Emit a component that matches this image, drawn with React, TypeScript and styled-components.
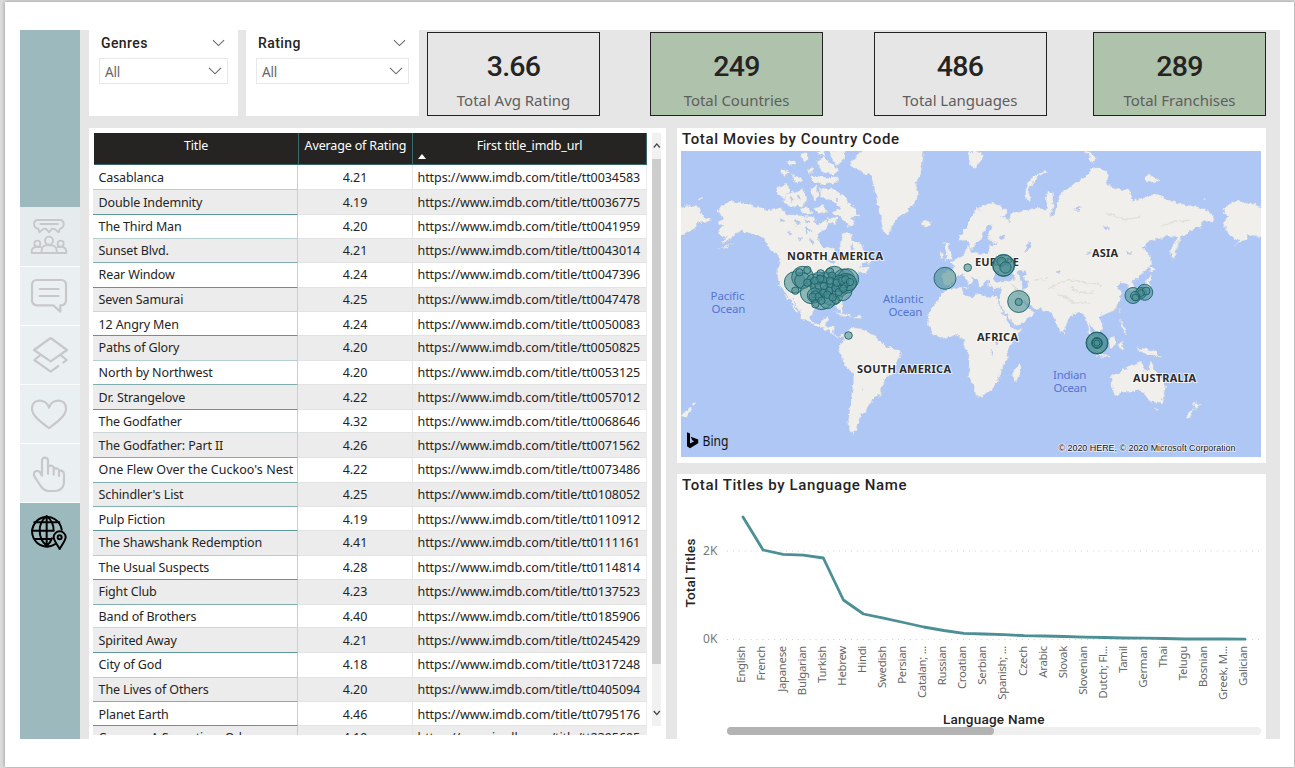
import React from "react";
import styled, { createGlobalStyle } from "styled-components";

const UI = `"Noto Sans", "Open Sans", sans-serif`;
const DIN = `Roboto, "Liberation Sans", sans-serif`;
const TEAL = "#4c8f94";

const GlobalStyle = createGlobalStyle`
  * { box-sizing: border-box; }
  body { margin: 0; background: #dedede; font-family: ${UI}; color: #252423; overflow: hidden; }
`;

const Page = styled.div`
  height: 768px;
  padding: 2px 1px 1px 5px;
  background: #dcdcdc;
`;

const Sheet = styled.main`
  height: 765px;
  padding: 28px 14px 0 15px;
  background: #fff;
  box-shadow: 0 0 4px rgba(0, 0, 0, 0.35);
`;

const Report = styled.div`
  display: flex;
  height: 709px;
  padding-right: 14px;
  background: #e6e6e6;
`;

const Sidebar = styled.nav`
  width: 60px;
  flex: none;
  padding-top: 177px;
  background: #9cbabe;
`;

const NavItem = styled.div<{ $h: number; $tone?: "first" | "active" }>`
  height: ${(p) => p.$h}px;
  overflow: hidden;
  background: ${(p) => (p.$tone === "active" ? "#9cbabe" : p.$tone === "first" ? "#e6eced" : "#eaf0f1")};
  border-bottom: ${(p) => (p.$tone === "active" ? "0" : "1px solid #fbfdfd")};
  svg { display: block; width: 60px; height: 60px; fill: none; stroke: ${(p) => (p.$tone === "active" ? "#000" : "#c8c8ca")};
    stroke-width: 6.6; stroke-linejoin: round; stroke-linecap: round; }
`;

const Content = styled.div`
  flex: 1;
  padding-left: 9px;
  display: flex;
  flex-direction: column;
  gap: 12px;
`;

const TopRow = styled.div`
  display: flex;
  height: 86px;
`;

const Slicer = styled.section<{ $w: number }>`
  width: ${(p) => p.$w}px;
  flex: none;
  margin-right: 8px;
  padding: 0 10px;
  background: #fff;
`;

const SlicerHead = styled.div`
  display: flex;
  align-items: center;
  justify-content: space-between;
  height: 27px;
  padding: 0 3px 1px 2px;
  font: 500 14px ${DIN};
  letter-spacing: 0.4px;
`;

const SlicerBox = styled.div`
  display: flex;
  align-items: center;
  justify-content: space-between;
  height: 26px;
  margin-top: 1px;
  padding: 0 5px;
  border: 1px solid #e8e8e8;
  font-size: 13.5px;
  line-height: 20px;
  letter-spacing: -0.2px;
  color: #666;
  span { padding-top: 2px; }
`;

const Cards = styled.div`
  flex: 1;
  display: grid;
  grid-template-columns: 223px 223.5px 219.5px 173px;
  padding-top: 2px;
`;

const Card = styled.article<{ $green?: boolean }>`
  width: 173px;
  height: 84px;
  padding-top: 17px;
  border: 1px solid #222;
  background: ${(p) => (p.$green ? "#aec2ac" : "#e6e6e6")};
  text-align: center;
`;

const CardValue = styled.div`
  font: 500 28.5px/34px ${DIN};
  letter-spacing: -0.7px;
`;

const CardLabel = styled.div`
  font-size: 15px;
  line-height: 22px;
  margin-top: 5px;
  letter-spacing: -0.03px;
  color: #605e5c;
`;

const Body = styled.div`
  display: flex;
  gap: 11px;
  height: 611px;
`;

const TablePanel = styled.section`
  display: flex;
  width: 577px;
  flex: none;
  padding: 5px 5px 4px 4px;
  background: #fff;
`;

const Table = styled.div`
  width: 554px;
  height: 602px;
  overflow: hidden;
`;

const Columns = styled.div`
  display: grid;
  grid-template-columns: 205px 115px 234px;
`;

const HeadRow = styled(Columns)`
  height: 32px;
  padding-left: 1px;
  grid-template-columns: 205px 114px 234px;
`;

const HeadCell = styled.div`
  position: relative;
  padding-top: 3px;
  background: #252423;
  border-right: 1px solid #38696c;
  border-bottom: 1px solid #38696c;
  font-size: 12.5px;
  line-height: 20px;
  letter-spacing: -0.15px;
  text-align: center;
  white-space: nowrap;
  color: #fff;
`;

const SortMark = styled.i`
  position: absolute;
  left: 5px;
  bottom: 5px;
  border: 4.5px solid transparent;
  border-top: 0;
  border-bottom: 5px solid #fff;
`;

const Row = styled(Columns)<{ $h: number; $odd: boolean; $drop: number }>`
  height: ${(p) => p.$h}px;
  font-size: 12.5px;
  line-height: ${(p) => 24 + 2 * p.$drop}px;
  white-space: nowrap;
  background: ${(p) => (p.$odd ? "#ececec" : "#fff")};
  > div { height: ${(p) => p.$h}px; }
`;

const TitleCell = styled.div<{ $line: string; $track?: number }>`
  padding-left: 5.6px;
  letter-spacing: ${(p) => p.$track ?? -0.14}px;
  border-right: 1px solid #c3d3d3;
  border-bottom: 1px solid ${(p) => p.$line};
`;

const RatingCell = styled.div`
  text-align: center;
  letter-spacing: -0.05px;
  border-right: 1px solid #e6e6e6;
  border-bottom: 1px solid #e3e3e3;
`;

const UrlCell = styled.div`
  padding-left: 4.5px;
  letter-spacing: -0.07px;
  border-right: 1px solid #ececec;
  border-bottom: 1px solid #e3e3e3;
`;

const Scroll = styled.div`
  display: flex;
  flex-direction: column;
  align-items: center;
  justify-content: space-between;
  width: 9px;
  height: 593px;
  margin-left: 5px;
  background: #f1f1f1;
  svg { display: block; }
`;

const Thumb = styled.div`
  width: 9px;
  height: 505px;
  margin-bottom: 36px;
  background: #cdcdcd;
`;

const RightCol = styled.div`
  flex: 1;
  display: flex;
  flex-direction: column;
  gap: 11px;
`;

const Panel = styled.section<{ $h: number }>`
  height: ${(p) => p.$h}px;
  padding: 0 4px;
  background: #fff;
  svg { display: block; }
`;

const PanelTitle = styled.h2`
  margin: 0;
  height: 23px;
  padding-left: 1px;
  font: 500 15px/22px ${DIN};
  letter-spacing: 0.62px;
  white-space: nowrap;
`;

const ChartTrack = styled.div`
  width: 534px;
  height: 8px;
  margin-left: 46px;
  border-radius: 4px;
  background: #efefef;
`;

const ChartThumb = styled.div`
  width: 267px;
  height: 8px;
  border-radius: 4px;
  background: #b3b3b3;
`;

const Chevron = ({ w = 14, color = "#666" }: { w?: number; color?: string }) => (
  <svg width={w} height={8} viewBox="0 0 14 8" fill="none" stroke={color} strokeWidth={1.1}>
    <path d="M1 .8 7 6.8 13 .8" />
  </svg>
);

const PeopleIcon = () => (
  <svg viewBox="60 21 180 180">
    <path strokeWidth={5.6} d="M112 60H182Q191 62 191 72Q191 84 180 86L176 97L164 87L156 86L147 97L138 86L130 87L118 97L115 86Q102 84 102 72Q102 62 112 60ZM121 72H174" />
    <g strokeWidth={5.6}>
      <circle cx="112" cy="131" r="9" /><circle cx="147" cy="122" r="12" /><circle cx="182" cy="131" r="9" />
      <path d="M125 159V151Q126 136 140 136H154Q168 136 170 151V159M122 141H108Q96 142 95 153V159H199V153Q198 142 186 141H173" />
    </g>
  </svg>
);
const CommentIcon = () => (
  <svg viewBox="60 201 180 180">
    <path d="M110 240H184Q198 241 198 254V302Q197 315 184 316H181V335L160 316H110Q97 315 96 302V254Q97 241 110 240ZM119 267H176M119 288H176" />
  </svg>
);
const LayersIcon = () => (
  <svg viewBox="60 378 180 180">
    <path d="M152 414 201 450 152 484 102 450ZM119 467 103 480 152 515 175 498M184 467 200 480 190 488" />
  </svg>
);
const HeartIcon = () => (
  <svg viewBox="60 555 180 180">
    <path d="M147 684C125 668 96 648 96 626C96 594 138 594 147 623C156 594 198 594 198 626C198 648 169 668 147 684Z" />
  </svg>
);
const HandIcon = () => (
  <svg viewBox="60 732 180 180">
    <path d="M126 827V782Q127 773 135 773Q143 773 144 782V821M144 800Q153 794 161 801V824M161 807Q172 802 177 810V828M178 812Q190 810 192 821V848Q189 873 163 873H146Q132 872 122 858L103 829Q99 817 108 813Q115 811 121 818L126 827" />
  </svg>
);
const GlobeIcon = () => (
  <svg viewBox="60 909 180 180">
    <g strokeWidth={6}>
      <path d="M166 1032A44.5 44.5 0 1 1 185 989M140 948V1037M140 948C112 970 112 1014 140 1037M140 948C154 959 161 975 161 992M140 1037Q151 1029 156 1015M96 992H160M103 967H178M103 1017H155" />
      <path d="M179 1047C170 1031 161 1021 161 1012A18 18 0 0 1 197 1012C197 1021 188 1031 179 1047Z" />
      <circle cx="179" cy="1012" r="6" />
    </g>
  </svg>
);

const S = "#5d969b";
const M = "#82aeb2";
const L = "#b5cfd0";
const G = "#cdd6d6";
const rows: [string, string, string, number, string, number?][] = [
  ["Casablanca", "4.21", "0034583", 25, L, 1],
  ["Double Indemnity", "4.19", "0036775", 25, S, 1],
  ["The Third Man", "4.20", "0041959", 24, L],
  ["Sunset Blvd.", "4.21", "0043014", 24, M],
  ["Rear Window", "4.24", "0047396", 25, S],
  ["Seven Samurai", "4.25", "0047478", 24, G],
  ["12 Angry Men", "4.24", "0050083", 24, S, 1],
  ["Paths of Glory", "4.20", "0050825", 25, L],
  ["North by Northwest", "4.20", "0053125", 24, M],
  ["Dr. Strangelove", "4.22", "0057012", 25, S, 1],
  ["The Godfather", "4.32", "0068646", 23, G],
  ["The Godfather: Part II", "4.26", "0071562", 25, M, 1],
  ["One Flew Over the Cuckoo's Nest", "4.22", "0073486", 25, M],
  ["Schindler's List", "4.25", "0108052", 24, M],
  ["Pulp Fiction", "4.19", "0110912", 24, S, 1],
  ["The Shawshank Redemption", "4.41", "0111161", 25, L],
  ["The Usual Suspects", "4.28", "0114814", 24, S],
  ["Fight Club", "4.23", "0137523", 25, M],
  ["Band of Brothers", "4.40", "0185906", 23, G],
  ["Spirited Away", "4.21", "0245429", 25, S, 1],
  ["City of God", "4.18", "0317248", 25, L],
  ["The Lives of Others", "4.20", "0405094", 24, M],
  ["Planet Earth", "4.46", "0795176", 24, S, 1],
  ["Cosmos: A Spacetime Odyssey", "4.19", "2395695", 25, M],
];

/* Western hemisphere coastlines */
const westLand = [
  "M20 262 60 255 88 262 100 290 122 300 110 308 85 308 78 325 20 356Z",
  "M143 275 160 252 190 243 240 252 300 272 330 262 350 282 400 288 432 290 440 312 468 300 478 318 450 340 445 362 462 382 492 388 504 412 514 402 510 372 518 338 545 342 550 365 575 375 580 388 600 412 606 425 582 432 572 442 600 440 588 458 566 456 560 470 550 500 530 530 520 545 515 560 524 590 514 588 505 562 480 555 460 562 440 560 425 575 422 592 430 610 450 612 460 595 476 590 472 606 465 618 490 620 490 640 500 648 525 640 522 650 498 652 480 636 462 626 438 620 410 605 395 590 385 565 366 535 385 576 376 572 354 532 340 510 325 485 322 460 326 430 330 415 310 395 295 380 284 360 265 345 240 342 215 330 200 342 175 362 150 372 170 352 146 342 145 330 158 320 140 305 160 298 154 288Z",
  "M525 640 545 625 580 630 612 645 630 665 655 680 690 692 695 705 680 725 675 760 645 778 640 800 630 822 612 830 605 850 590 860 588 878 572 884 570 902 560 915 562 930 550 938 552 950 538 932 535 900 540 860 545 820 550 790 550 762 530 742 515 715 505 692 510 675 520 660Z",
  "M580 80 575 96 545 120 540 130 560 152 600 165 612 200 622 250 632 296 640 335 655 345 665 318 682 296 702 284 720 262 738 250 746 215 736 190 752 165 764 80Z",
  "M750 305 765 300 785 305 780 318 765 322 752 314Z",
  "M320 200 350 192 362 212 346 236 322 224Z",
  "M352 222 400 206 412 236 398 262 352 258 340 240Z",
  "M330 152 350 146 356 160 340 170Z", "M362 160 384 168 400 182 376 188Z", "M352 126 372 118 380 132 360 138Z",
  "M392 104 410 98 418 118 400 124Z", "M412 148 428 142 432 156 416 162Z", "M422 204 440 198 446 232 430 246Z",
  "M424 166 470 172 500 170 504 186 470 194 430 186Z", "M440 124 462 110 480 130 508 150 490 164 456 156Z",
  "M476 90 526 90 520 120 500 140 486 118Z", "M440 92 462 92 466 108 446 106Z",
  "M450 204 490 206 520 226 556 268 566 290 548 292 554 316 536 320 512 292 486 280 510 262 482 240 452 234Z",
  "M474 292 500 296 500 314 476 312Z", "M430 262 456 256 470 274 440 282Z", "M392 268 410 260 428 280 408 284Z",
  "M488 574 520 578 548 590 530 590 500 580Z", "M556 588 572 588 570 596 556 594Z",
  "M35 888 52 870 62 858 66 868 46 892Z", "M66 852 70 842 78 850 70 858Z", "M84 235 94 234 94 240 84 240Z", "M146 386 190 372 170 384Z",
];

/* Eastern hemisphere coastlines */
const eastLand = [
  "M-6 365 0 345 20 320 38 285 62 260 90 247 118 255 142 272 134 290 122 288 148 304 152 282 200 270 240 262 260 268 258 235 264 212 278 215 280 262 270 290 284 284 290 250 310 216 345 190 385 165 398 142 425 145 447 165 440 192 470 208 508 210 520 242 562 228 590 222 622 240 680 255 720 262 745 272 766 296 756 308 730 300 724 322 690 332 664 352 655 380 640 416 630 400 634 376 652 352 620 346 600 360 575 358 548 386 570 402 576 430 556 456 536 468 518 486 526 508 512 514 500 492 480 488 470 500 486 520 478 550 465 570 445 580 425 584 418 594 430 615 428 630 414 640 400 622 388 612 396 644 408 668 400 668 386 640 382 612 374 590 360 574 345 580 322 604 310 635 300 638 284 600 275 580 255 572 225 566 205 552 182 532 200 562 226 576 216 592 182 610 160 618 150 600 130 570 115 540 122 520 125 505 100 508 84 496 90 484 70 484 72 502 60 498 50 478 34 466 40 486 30 500 6 460 -6 466 -28 498 -50 498 -52 456 -22 456 -18 436 -30 426 0 412 16 404 22 378 32 378 32 400 60 400 84 398 88 380 112 368 88 362 84 340 94 320 84 312 70 338 60 362 46 370 40 388 28 380 20 360Z",
  "M-50 512 -30 506 5 503 12 522 40 535 46 520 78 528 108 530 124 566 142 602 152 620 164 630 188 624 168 655 142 684 146 714 122 745 120 772 102 802 76 824 52 827 38 792 25 752 30 720 20 690 10 658 -12 646 -52 656 -80 640 -96 618 -94 580 -72 545Z",
  "M178 728 184 745 174 782 160 782 156 762Z",
  "M452 770 482 758 510 736 545 726 550 746 565 752 572 720 586 750 606 775 618 796 615 822 604 850 580 850 560 832 544 812 500 815 464 828 456 800Z",
  "M582 864 596 864 590 876Z", "M708 842 714 852 722 852 706 868 702 858Z", "M704 868 686 894 678 890 694 872Z",
  "M443 664 464 648 470 664 460 686 448 684Z", "M378 652 402 668 428 694 424 702 404 690Z", "M410 703 450 708 450 713 412 708Z",
  "M474 668 492 664 484 676 488 690 478 688Z", "M528 682 550 688 580 690 606 710 580 706 556 704Z",
  "M480 594 488 606 496 634 502 644 490 640Z", "M478 566 482 572 478 580Z", "M310 632 318 640 312 648Z",
  "M570 436 586 448 572 456ZM572 460 572 492 556 510 534 516 520 522 530 508 552 500Z",
  "M258 150 264 156 236 170 214 196 206 216 212 240 198 236 196 212 212 176Z",
  "M24 96 50 94 72 104 60 124 42 146 30 130Z", "M370 90 392 98 412 116 396 128 388 110Z",
  "M554 168 578 168 604 182 578 186 556 182Z", "M728 234 740 236 732 240Z",
  "M910 262 870 250 830 243 800 256 788 280 810 290 792 305 800 335 835 365 820 382 870 346 910 352Z",
  "M-46 366 -34 372 -30 396 -22 416 -46 424 -38 404 -46 388Z", "M-60 398 -50 396 -48 414 -60 416Z",
  "M656 362 650 390 640 416 630 400 636 374Z", "M10 500 26 502 20 508Z",
];

const waters = [
  "M100 466 116 458 130 468 160 462 166 478 140 482 112 484 98 480Z",
  "M176 456 196 452 200 464 190 472 202 486 204 504 190 506 184 486Z",
  "M340 268 366 262 354 272Z", "M430 320 446 322 440 332Z", "M284 456 304 450 300 460Z", "M376 404 392 392 388 402Z",
  "M208 362 212 380 196 398 204 372Z", "M104 660 116 664 110 674Z", "M94 690 98 706 92 702Z", "M502 390 516 398 504 402Z", "M118 350 134 340 132 356 120 360Z",
];

const northWaters = [
  "M372 300 392 306 380 316Z", "M404 322 424 330 410 340Z", "M352 332 366 336 356 346Z", "M420 352 432 366 424 378Z",
  "M384 352 398 356 388 364Z", "M330 296 346 302 334 308Z", "M404 298 420 306 412 314Z", "M470 420 496 424 484 430Z", "M540 372 552 384 544 388Z",
  "M362 232 374 240 364 248Z", "M384 222 394 232 388 238Z", "M500 232 508 246 498 244Z", "M578 806 582 810 578 812Z",
];

const reliefs = [
  "M262 512 290 492 330 480 380 486 420 494", "M280 516 310 530 350 550 390 548", "M330 500 360 520 400 516",
  "M600 320 640 306 690 300", "M440 280 500 300 540 290", "M150 490 180 520 210 530", "M224 480 260 476", "M440 420 480 400",
];

const usBig: [number, number, number][] = [
  [75, 97, 32], [98, 82, 33], [98, 92, 24], [124, 128, 33], [130, 92, 20], [155, 112, 33], [155, 147, 32], [168, 100, 34], [186, 132, 34],
  [193, 82, 33], [204, 108, 34], [216, 122, 30], [222, 90, 33], [234, 88, 32], [228, 100, 30], [236, 98, 24], [146, 84, 18], [172, 152, 24], [134, 136, 22], [212, 100, 24],
];
const usSmall: [number, number][] = [
  [88, 67], [112, 60], [112, 98], [76, 122], [152, 70], [180, 65], [186, 77], [160, 90], [150, 86], [134, 92], [135, 133], [128, 140], [146, 140],
  [136, 163], [160, 128], [178, 122], [172, 134], [196, 114], [200, 98], [222, 103], [216, 92], [226, 88], [197, 150], [188, 142], [162, 108], [206, 126], [240, 96], [154, 152], [180, 92], [220, 116],
];
const world: [number, number, number][] = [
  [945, 278.3, 11], [967.7, 267.6, 3.8], [1003.6, 265.4, 11], [1003.6, 265.4, 10.6], [1001.5, 261.8, 4.6], [1005.5, 267.5, 5.6], [1018.7, 301.5, 11], [1018.7, 302, 3.6],
  [1133, 295.5, 8], [1144.7, 292.3, 8], [1141, 293, 5.4], [1146, 291, 4], [1141, 293, 3.4], [1135, 296, 4.5], [1135.5, 297.5, 3.5],
  [1097, 343, 11], [1097, 343, 10.6], [1097, 343, 5.4], [1097, 343, 5], [1097, 343, 4.6], [1097, 343, 3], [848.5, 335.5, 3.8],
];

const MapLabel = styled.text`
  font: 700 11px ${UI};
  fill: #2b2b2b;
  stroke: rgba(255, 255, 255, 0.7);
  stroke-width: 2px;
  paint-order: stroke;
`;
const SeaLabel = styled.text`
  font: 11.5px ${UI};
  fill: #5775d0;
  letter-spacing: 0.1px;
`;

const WorldMap = () => (
  <svg width={580} height={306} viewBox="681 151 580 306">
    <defs>
      <filter id="coast" x="0" y="0" width="100%" height="100%">
        <feTurbulence type="fractalNoise" baseFrequency="0.19" numOctaves={3} seed={4} result="n" />
        <feDisplacementMap in="SourceGraphic" in2="n" scale={6} xChannelSelector="R" yChannelSelector="G" />
      </filter>
    </defs>
    <rect x="681" y="151" width="580" height="306" fill="#afc7f4" />
    <g filter="url(#coast)" fill="#f0efeb" stroke="#c9cfdf" strokeWidth={1.5}>
      <rect x="670" y="140" width="600" height="330" fill="none" stroke="none" />
      <g transform="translate(670 120) scale(.33333)">
        {westLand.map((d) => <path key={d} d={d} />)}
        {northWaters.map((d) => <path key={d} d={d} fill="#afc7f4" />)}
      </g>
      <g transform="translate(960 120) scale(.33333)">
        {eastLand.map((d) => <path key={d} d={d} />)}
        {waters.map((d) => <path key={d} d={d} fill="#afc7f4" />)}
        {reliefs.map((d) => <path key={d} d={d} fill="none" stroke="#e0dfda" strokeWidth={4} />)}
      </g>
    </g>
    <MapLabel x="787" y="260" textLength={96}>NORTH AMERICA</MapLabel>
    <MapLabel x="857" y="372.5" textLength={94}>SOUTH AMERICA</MapLabel>
    <MapLabel x="975" y="266" textLength={44}>EUROPE</MapLabel>
    <MapLabel x="977" y="341" textLength={41}>AFRICA</MapLabel>
    <MapLabel x="1092" y="256.5" textLength={26}>ASIA</MapLabel>
    <MapLabel x="1133" y="382" textLength={63}>AUSTRALIA</MapLabel>
    <SeaLabel x="710.5" y="300" textLength={34}>Pacific</SeaLabel>
    <SeaLabel x="711.5" y="313" textLength={34}>Ocean</SeaLabel>
    <SeaLabel x="883" y="302.5" textLength={40.5}>Atlantic</SeaLabel>
    <SeaLabel x="888.5" y="316" textLength={34}>Ocean</SeaLabel>
    <SeaLabel x="1053" y="379" textLength={33.5}>Indian</SeaLabel>
    <SeaLabel x="1053.5" y="391.5" textLength={33.5}>Ocean</SeaLabel>
    <g fill={TEAL} fillOpacity={0.6} stroke="#1b6266" strokeWidth={0.9}>
      {usBig.map(([x, y, r], i) => <circle key={i} cx={770 + x / 3} cy={250 + y / 3} r={r / 3} />)}
      {usSmall.map(([x, y], i) => <circle key={i} cx={770 + x / 3} cy={250 + y / 3} r={3.7} />)}
      {world.map(([x, y, r], i) => <circle key={i} cx={x} cy={y} r={r} />)}
    </g>
    <path fill="#000" fillRule="evenodd" d="M687 432.3 690 433.5V443.6L694.2 441.3 692.2 440.3 690.8 436.8 698.2 439.4V443.2L690 448.2 687 446.3Z" />
    <text x="702.5" y="445.5" fontFamily={UI} fontSize="13.5" textLength={26} lengthAdjust="spacingAndGlyphs" fill="#111">Bing</text>
    <text x="1058.5" y="451" fontFamily="Liberation Sans, Arial, sans-serif" fontSize="9" textLength={177} fill="#111" stroke="#e8eefb" strokeWidth={1.5} paintOrder="stroke">© 2020 HERE, © 2020 Microsoft Corporation</text>
  </svg>
);

const languages = ["English", "French", "Japanese", "Bulgarian", "Turkish", "Hebrew", "Hindi", "Swedish", "Persian", "Catalan; ...", "Russian", "Croatian", "Serbian", "Spanish; ...", "Czech", "Arabic", "Slovak", "Slovenian", "Dutch; Fl...", "Tamil", "German", "Thai", "Telugu", "Bosnian", "Greek, M...", "Galician"];
const levels = [517, 550, 554.3, 555.2, 558, 600, 614, 618.2, 622.5, 627, 630.5, 633.3, 634, 634.6, 635.7, 636, 636.5, 637.2, 637.5, 638, 638.2, 638.5, 639, 639, 639, 639.2];
const px = (i: number) => 743 + 20.08 * i;

const AxisText = styled.text`
  font: 11.4px ${UI};
  letter-spacing: -0.3px;
  fill: #666;
`;
const ScaleText = styled.text`
  font: 12px ${UI};
  fill: #777;
`;
const AxisTitle = styled.text`
  font: 500 13.5px ${DIN};
  fill: #252423;
`;

const LineChart = () => (
  <svg width={581} height={230} viewBox="681 497 581 230">
    {[551, 639.5].map((y) => <path key={y} d={`M727 ${y}H1261`} stroke="#cfcfcf" strokeWidth={1.2} strokeDasharray="1 4.9" />)}
    <ScaleText x="703" y="555" textLength={14.5}>2K</ScaleText>
    <ScaleText x="703" y="643" textLength={14.5}>0K</ScaleText>
    <AxisTitle transform="translate(694.5 607.5) rotate(-90)" textLength={69}>Total Titles</AxisTitle>
    <AxisTitle x="943" y="724" textLength={101.5}>Language Name</AxisTitle>
    <polyline points={levels.map((y, i) => `${px(i)},${y}`).join(" ")} fill="none" stroke={TEAL} strokeWidth={2.8} strokeLinejoin="round" strokeLinecap="round" />
    {languages.map((name, i) => (
      <AxisText key={name} textAnchor="end" transform={`translate(${px(i) + 2.4} 646) rotate(-90)`}>{name}</AxisText>
    ))}
  </svg>
);

const Arrow = ({ down }: { down?: boolean }) => (
  <svg width={9} height={26} viewBox="0 0 9 26" fill="none" stroke="#444" strokeWidth={1.3}>
    <path d={down ? "M1.8 11 4.8 14.6 7.8 11" : "M1.8 14.5 4.8 10.9 7.8 14.5"} />
  </svg>
);

export default function App() {
  return (
    <Page>
      <GlobalStyle />
      <Sheet>
        <Report>
          <Sidebar>
            <NavItem $h={60} $tone="first"><PeopleIcon /></NavItem>
            <NavItem $h={59}><CommentIcon /></NavItem>
            <NavItem $h={59}><LayersIcon /></NavItem>
            <NavItem $h={59}><HeartIcon /></NavItem>
            <NavItem $h={59}><HandIcon /></NavItem>
            <NavItem $h={60} $tone="active"><GlobeIcon /></NavItem>
          </Sidebar>
          <Content>
            <TopRow>
              <Slicer $w={149}>
                <SlicerHead>Genres<Chevron w={13} /></SlicerHead>
                <SlicerBox><span>All</span><Chevron /></SlicerBox>
              </Slicer>
              <Slicer $w={173}>
                <SlicerHead>Rating<Chevron w={13} /></SlicerHead>
                <SlicerBox><span>All</span><Chevron /></SlicerBox>
              </Slicer>
              <Cards>
                <Card><CardValue>3.66</CardValue><CardLabel>Total Avg Rating</CardLabel></Card>
                <Card $green><CardValue>249</CardValue><CardLabel>Total Countries</CardLabel></Card>
                <Card><CardValue>486</CardValue><CardLabel>Total Languages</CardLabel></Card>
                <Card $green><CardValue>289</CardValue><CardLabel>Total Franchises</CardLabel></Card>
              </Cards>
            </TopRow>
            <Body>
              <TablePanel>
                <Table>
                  <HeadRow>
                    <HeadCell>Title</HeadCell>
                    <HeadCell>Average of Rating</HeadCell>
                    <HeadCell>First title_imdb_url<SortMark /></HeadCell>
                  </HeadRow>
                  {rows.map(([title, rating, id, h, line, drop = 0], i) => (
                    <Row key={id} $h={h} $odd={i % 2 === 1} $drop={drop}>
                      <TitleCell $line={line} $track={title.length > 28 ? 0.04 : undefined}>{title}</TitleCell>
                      <RatingCell>{rating}</RatingCell>
                      <UrlCell>https://www.imdb.com/title/tt{id}</UrlCell>
                    </Row>
                  ))}
                </Table>
                <Scroll>
                  <Arrow />
                  <Thumb />
                  <Arrow down />
                </Scroll>
              </TablePanel>
              <RightCol>
                <Panel $h={335}>
                  <PanelTitle>Total Movies by Country Code</PanelTitle>
                  <WorldMap />
                </Panel>
                <Panel $h={265}>
                  <PanelTitle>Total Titles by Language Name</PanelTitle>
                  <LineChart />
                  <ChartTrack><ChartThumb /></ChartTrack>
                </Panel>
              </RightCol>
            </Body>
          </Content>
        </Report>
      </Sheet>
    </Page>
  );
}
